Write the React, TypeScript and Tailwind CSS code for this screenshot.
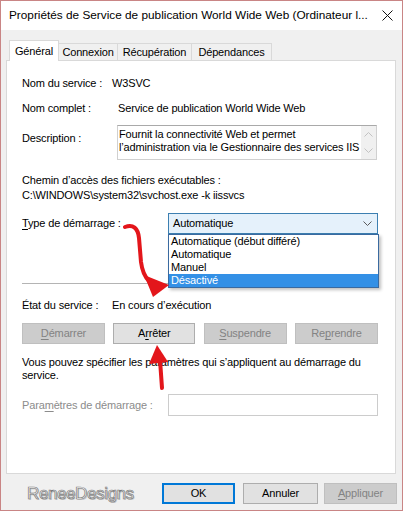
import React from 'react';

const Chevron = ({ up = false, className = '' }: { up?: boolean; className?: string }) => (
  <svg width="9" height="5" viewBox="0 0 9 5" className={className}>
    <polyline
      points={up ? '0.5,4.5 4.5,0.5 8.5,4.5' : '0.5,0.5 4.5,4.5 8.5,0.5'}
      fill="none"
      stroke="currentColor"
      strokeWidth="1"
    />
  </svg>
);

const Btn = ({
  children,
  disabled = false,
  className = '',
}: {
  children: React.ReactNode;
  disabled?: boolean;
  className?: string;
}) => (
  <div
    className={`h-[21px] shrink-0 flex items-center justify-center border ${
      disabled ? 'bg-[#cccccc] border-[#bfbfbf] text-[#838383]' : 'bg-[#e1e1e1] border-[#adadad] text-black'
    } ${className}`}
  >
    {children}
  </div>
);

export default function App() {
  return (
    <div className="w-[406px] h-[513px] bg-white font-['Liberation_Sans',Arial,sans-serif] text-[11px] tracking-[-0.15px] text-black leading-none">
      <div className="relative w-[403px] h-[511px] border border-[#c98585] bg-[#f0f0f0] flex flex-col">
        {/* title bar */}
        <div className="h-[29px] bg-white flex items-center pl-[8px] pr-[5px]">
          <span className="text-[11.8px] tracking-normal whitespace-nowrap">
            Propriétés de Service de publication World Wide Web (Ordinateur l...
          </span>
          <svg width="11" height="11" viewBox="0 0 11 11" className="ml-auto mr-[4px] text-[#111]">
            <path d="M0.5 0.5 L10.5 10.5 M10.5 0.5 L0.5 10.5" stroke="currentColor" strokeWidth="1" />
          </svg>
        </div>

        <div className="flex-1 flex flex-col pt-[10px] pl-[5px] pr-[6px]">
          {/* tabs */}
          <div className="flex items-end h-[20px] ml-[3px]">
            <div className="relative z-10 -mb-px h-[21px] w-[50px] bg-white border border-b-0 border-[#d9d9d9] flex items-center justify-center">
              Général
            </div>
            <div className="h-[17px] w-[59px] border border-l-0 border-b-0 border-[#d9d9d9] flex items-center justify-center">
              Connexion
            </div>
            <div className="h-[17px] w-[74px] border border-l-0 border-b-0 border-[#d9d9d9] flex items-center justify-center">
              Récupération
            </div>
            <div className="h-[17px] w-[80px] border border-l-0 border-b-0 border-[#d9d9d9] flex items-center justify-center">
              Dépendances
            </div>
          </div>

          {/* panel */}
          <div className="relative w-[390px] h-[414px] bg-white border border-[#d9d9d9] pl-[15px] flex flex-col">
            <div className="mt-[14px] h-[16px] flex items-center">
              <span className="w-[90px]">Nom du service :</span>
              <span>W3SVC</span>
            </div>
            <div className="mt-[9px] h-[16px] flex items-center">
              <span className="w-[96px]">Nom complet :</span>
              <span>Service de publication World Wide Web</span>
            </div>

            <div className="mt-[9px] flex">
              <span className="w-[95px] pt-[8px]">Description :</span>
              <div className="w-[260px] h-[35px] border border-[#d0d0d0] border-t-[#a9a9a9] flex">
                <div className="flex-1 pl-[1px] pt-[2px] leading-[13px] whitespace-nowrap overflow-hidden">
                  Fournit la connectivité Web et permet
                  <br />
                  l’administration via le Gestionnaire des services IIS
                </div>
                <div className="w-[15px] shrink-0 bg-[#f0f0f0] flex flex-col items-center justify-between py-[6px] text-[#c2c2c2]">
                  <Chevron up />
                  <Chevron />
                </div>
              </div>
            </div>

            <div className="mt-[13px] h-[15px] flex items-center">Chemin d’accès des fichiers exécutables :</div>
            <div className="h-[15px] flex items-center">C:\WINDOWS\system32\svchost.exe -k iissvcs</div>

            <div className="relative mt-[10px] flex items-center">
              <span className="w-[146px]">
                <span className="underline underline-offset-2">T</span>ype de démarrage :
              </span>
              <div className="w-[210px] h-[21px] bg-[#e5f1fb] border border-[#3c7fb1] flex items-center pl-[4px] pr-[5px]">
                <span>Automatique</span>
                <Chevron className="ml-auto text-[#5a5a5a]" />
              </div>
              {/* open list */}
              <div className="absolute z-20 left-[146px] top-[21px] w-[211px] bg-white border border-[#3a6aa0] shadow-[2px_2px_3px_rgba(0,0,0,0.25)] flex flex-col leading-[13px]">
                <div className="pl-[2px] h-[13px]">Automatique (début différé)</div>
                <div className="pl-[2px] h-[13px]">Automatique</div>
                <div className="pl-[2px] h-[13px]">Manuel</div>
                <div className="pl-[2px] h-[13px] bg-[#3390e6] text-white">Désactivé</div>
              </div>
            </div>

            <div className="mt-[49px] w-[356px] h-px bg-[#b4b4b4]" />

            <div className="mt-[13px] h-[16px] flex items-center">
              <span className="w-[90px]">État du service :</span>
              <span>En cours d’exécution</span>
            </div>

            <div className="mt-[10px] w-[356px] flex justify-between">
              <Btn disabled className="w-[83px]">
                <span className="underline underline-offset-2">D</span>émarrer
              </Btn>
              <Btn className="w-[82px]">
                A<span className="underline underline-offset-2">r</span>rêter
              </Btn>
              <Btn disabled className="w-[83px]">
                <span className="underline underline-offset-2">S</span>uspendre
              </Btn>
              <Btn disabled className="w-[83px]">
                Re<span className="underline underline-offset-2">p</span>rendre
              </Btn>
            </div>

            <div className="mt-[12px] leading-[13px]">
              Vous pouvez spécifier les paramètres qui s’appliquent au démarrage du
              <br />
              service.
            </div>

            <div className="mt-[12px] flex items-center">
              <span className="w-[146px] text-[#8c8c8c]">
                Para<span className="underline underline-offset-2">m</span>ètres de démarrage :
              </span>
              <div className="w-[210px] h-[22px] bg-white border border-[#cccccc]" />
            </div>
          </div>

          {/* bottom buttons */}
          <div className="mt-[9px] flex items-center">
            <div className="w-[156px] shrink-0 pl-[21px]">
              <span className="text-[17px] tracking-[-0.4px] text-[#f6f6f6] [-webkit-text-stroke:0.7px_#7a7a7a] [text-shadow:1px_1px_0_#c4c4c4]">
                ReneeDesigns
              </span>
            </div>
            <Btn className="w-[73px] !border-2 !border-[#0078d7]">OK</Btn>
            <Btn className="w-[75px] ml-[8px]">Annuler</Btn>
            <Btn disabled className="w-[73px] ml-[6px]">
              <span className="underline underline-offset-2">A</span>ppliquer
            </Btn>
          </div>
        </div>

        {/* red annotation arrows */}
        <svg className="absolute left-[-1px] top-[-1px] z-30 pointer-events-none" width="406" height="513">
          <path
            d="M125 227 C133 224 138 228 139 238 L141 262 C142 270 144 276 149 281"
            fill="none"
            stroke="#e3161b"
            strokeWidth="4"
            strokeLinecap="round"
          />
          <polygon points="144,275 153,297 169,285" fill="#e3161b" />
          <path d="M160 360 L162 388" fill="none" stroke="#e3161b" strokeWidth="4" strokeLinecap="round" />
          <polygon points="157,345 149,364 168,362" fill="#e3161b" />
        </svg>
      </div>
    </div>
  );
}
